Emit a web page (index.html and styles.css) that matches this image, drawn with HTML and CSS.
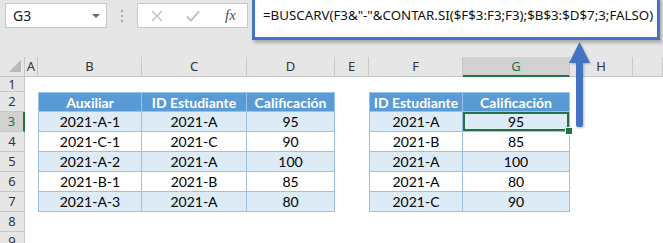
FILE: index.html
```html
<!DOCTYPE html>
<html lang="es">
<head>
    <meta charset="UTF-8">
    <title>BUSCARV con CONTAR.SI</title>
    <link rel="stylesheet" href="styles.css">
</head>
<body>
    <div class="window">
        <div class="toolbar">
            <div class="name-box">
                <span>G3</span>
                <span class="caret"></span>
            </div>
            <div class="grip"><i></i><i></i><i></i></div>
            <div class="fx-box">
                <svg class="icon" width="12" height="12" viewBox="0 0 12 12">
                    <path d="M1 1 L11 11 M11 1 L1 11" stroke="#c3c3c3" stroke-width="1.6" fill="none"/>
                </svg>
                <svg class="icon" width="14" height="12" viewBox="0 0 14 12">
                    <path d="M1 6.5 L5 10.5 L13 1.5" stroke="#c3c3c3" stroke-width="2" fill="none"/>
                </svg>
                <span class="fx">fx</span>
            </div>
            <div class="formula">=BUSCARV(F3&amp;"-"&amp;CONTAR.SI($F$3:F3;F3);$B$3:$D$7;3;FALSO)</div>
        </div>

        <div class="sheet">
            <div class="row head-row">
                <div class="corner"><span class="tri"></span></div>
                <div class="col-h">A</div>
                <div class="col-h">B</div>
                <div class="col-h">C</div>
                <div class="col-h">D</div>
                <div class="col-h">E</div>
                <div class="col-h">F</div>
                <div class="col-h active">G</div>
                <div class="col-h">H</div>
                <div class="col-h"></div>
            </div>
            <div class="row short">
                <div class="row-h">1</div>
            </div>
            <div class="row">
                <div class="row-h">2</div>
                <div></div>
                <div class="th first">Auxiliar</div>
                <div class="th">ID Estudiante</div>
                <div class="th">Calificación</div>
                <div></div>
                <div class="th first">ID Estudiante</div>
                <div class="th">Calificación</div>
            </div>
            <div class="row alt">
                <div class="row-h active">3</div>
                <div></div>
                <div class="td first">2021-A-1</div>
                <div class="td">2021-A</div>
                <div class="td">95</div>
                <div></div>
                <div class="td first">2021-A</div>
                <div class="td selected">95</div>
            </div>
            <div class="row">
                <div class="row-h">4</div>
                <div></div>
                <div class="td first">2021-C-1</div>
                <div class="td">2021-C</div>
                <div class="td">90</div>
                <div></div>
                <div class="td first">2021-B</div>
                <div class="td">85</div>
            </div>
            <div class="row alt">
                <div class="row-h">5</div>
                <div></div>
                <div class="td first">2021-A-2</div>
                <div class="td">2021-A</div>
                <div class="td">100</div>
                <div></div>
                <div class="td first">2021-A</div>
                <div class="td">100</div>
            </div>
            <div class="row">
                <div class="row-h">6</div>
                <div></div>
                <div class="td first">2021-B-1</div>
                <div class="td">2021-B</div>
                <div class="td">85</div>
                <div></div>
                <div class="td first">2021-A</div>
                <div class="td">80</div>
            </div>
            <div class="row alt">
                <div class="row-h">7</div>
                <div></div>
                <div class="td first">2021-A-3</div>
                <div class="td">2021-A</div>
                <div class="td">80</div>
                <div></div>
                <div class="td first">2021-C</div>
                <div class="td">90</div>
            </div>
            <div class="row">
                <div class="row-h">8</div>
            </div>
            <div class="row">
                <div class="row-h">9</div>
            </div>
        </div>

        <svg class="arrow" width="28" height="90" viewBox="0 0 28 90">
            <path d="M11 19 H18 V84 Q18 86 16 86 H13 Q11 86 11 84 Z" fill="#4472c4"/>
            <path d="M14.5 1 L25 22 L4 22 Z" fill="#4472c4"/>
        </svg>
    </div>
</body>
</html>
```

FILE: styles.css
```css
:root {
    --ui: #e6e6e6;
    --ui-line: #c8c8c8;
    --ui-active: #d2d2d2;
    --green: #217346;
    --blue: #4472c4;
    --head: #5b9bd5;
    --band: #ddebf7;
    --rule: #9bc2e6;
    --cols: 25px 13px 104px 105px 88px 34px 94px 107px 63px 1fr;
}

* {
    margin: 0;
    padding: 0;
    box-sizing: border-box;
}

body {
    width: 663px;
    height: 243px;
    overflow: hidden;
    background: #ffffff;
    color: #000000;
    font-family: Lato, "Liberation Sans", sans-serif;
}

.window {
    position: relative;
    width: 663px;
    height: 243px;
    overflow: hidden;
}

/* formula bar */

.toolbar {
    height: 57px;
    background: var(--ui);
    display: flex;
    align-items: flex-start;
}

.name-box {
    margin: 3px 0 0 5px;
    width: 102px;
    height: 25px;
    background: #ffffff;
    border: 1px solid var(--ui-line);
    display: flex;
    align-items: center;
    justify-content: space-between;
    padding: 0 6px 0 7px;
    font-family: "Noto Sans", sans-serif;
    font-size: 14px;
    color: #222;
}

.caret {
    width: 0;
    height: 0;
    border-left: 4px solid transparent;
    border-right: 4px solid transparent;
    border-top: 4px solid #6a6a6a;
}

.grip {
    width: 30px;
    padding-top: 10px;
    display: flex;
    flex-direction: column;
    align-items: center;
    gap: 3px;
}

.grip i {
    width: 2px;
    height: 2px;
    background: #a8a8a8;
}

.fx-box {
    margin-top: 3px;
    width: 111px;
    height: 25px;
    background: #ffffff;
    border: 1px solid var(--ui-line);
    display: flex;
    align-items: center;
    padding: 0 10px 0 13px;
    gap: 23px;
}

.fx {
    margin-left: 2px;
    font-family: "Liberation Serif", serif;
    font-style: italic;
    font-size: 15px;
    color: #505050;
}

.formula {
    margin: -3px 0 0 4px;
    width: 408px;
    height: 43px;
    background: #ffffff;
    border: 3px solid var(--blue);
    box-shadow: 2px 3px 3px rgb(0 0 0 / 0.25);
    padding: 6px 0 0 8px;
    font-family: "Noto Sans", sans-serif;
    font-size: 13.3px;
    white-space: nowrap;
    color: #111;
}

/* grid */

.row {
    display: grid;
    grid-template-columns: var(--cols);
    height: 20px;
}

.row.short {
    height: 15px;
}

.corner,
.col-h {
    background: var(--ui);
    border-right: 1px solid var(--ui-line);
    border-bottom: 1px solid var(--ui-line);
}

.corner {
    position: relative;
}

.tri {
    position: absolute;
    right: 3px;
    bottom: 4px;
    width: 0;
    height: 0;
    border-left: 12px solid transparent;
    border-bottom: 12px solid #b9b9b9;
}

.col-h,
.row-h {
    display: flex;
    align-items: center;
    justify-content: center;
    font-family: "Noto Sans", sans-serif;
    font-size: 13px;
    line-height: 1;
    color: #333;
}

.col-h.active {
    background: var(--ui-active);
    color: var(--green);
    border-bottom: 2px solid var(--green);
}

.row-h {
    background: var(--ui);
    border-right: 1px solid var(--ui-line);
    border-bottom: 1px solid var(--ui-line);
}

.row-h.active {
    background: var(--ui-active);
    color: var(--green);
    border-right: 2px solid var(--green);
}

.th,
.td {
    display: flex;
    align-items: center;
    justify-content: center;
    font-size: 14px;
    border-right: 1px solid var(--rule);
    border-bottom: 1px solid var(--rule);
}

.th {
    background: var(--head);
    color: #ffffff;
    font-weight: 700;
    border-top: 1px solid var(--rule);
}

.th.first,
.td.first {
    border-left: 1px solid var(--rule);
}

.alt .td {
    background: var(--band);
}

.td.selected {
    position: relative;
    box-shadow: inset 0 0 0 2px var(--green);
}

.td.selected::after {
    content: "";
    position: absolute;
    right: -4px;
    bottom: -4px;
    width: 6px;
    height: 6px;
    background: var(--green);
    border: 1px solid #ffffff;
}

.arrow {
    position: absolute;
    left: 565px;
    top: 41px;
    filter: drop-shadow(1px 1px 1px rgb(0 0 0 / 0.25));
}
```
